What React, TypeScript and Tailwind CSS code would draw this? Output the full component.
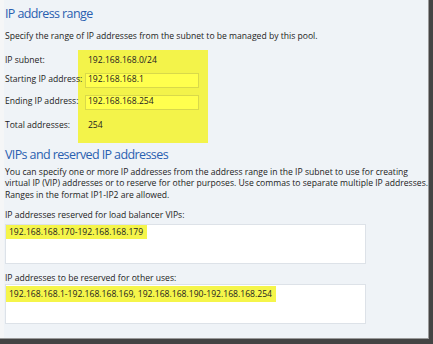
const font = "font-['Open_Sans','Noto_Sans',sans-serif]";

function Label({ children, h, mt }: { children: string; h: string; mt: string }) {
  return <div className={`${h} ${mt} relative z-10 flex items-center whitespace-nowrap`}>{children}</div>;
}

export default function App() {
  return (
    <div className={`w-[433px] h-[344px] bg-[#444] ${font} text-[#222]`}>
      <div className="flex w-[429px] h-[339px] border-r border-b border-[#9a9a9a] bg-[#eff3f7]">
        <div className="w-[7px] bg-[#f5f6f7]" />
        <div className="flex-1 pl-[1px] text-[8.6px] leading-[11.5px] whitespace-nowrap">
          {/* IP address range */}
          <h2 className="mt-[5px] text-[12.5px] leading-[17px] font-normal tracking-[-0.6px] text-[#2a60b0]">
            IP address range
          </h2>
          <p className="mt-[9px]">
            Specify the range of IP addresses from the subnet to be managed by this pool.
          </p>

          <div className="mt-[7px] flex">
            <div className="w-[73px] pt-[2px] flex flex-col">
              <Label h="h-[18px]" mt="mt-0">IP subnet:</Label>
              <Label h="h-[17px]" mt="mt-[2px]">Starting IP address:</Label>
              <Label h="h-[17px]" mt="mt-[5px]">Ending IP address:</Label>
              <Label h="h-[18px]" mt="mt-[6px]">Total addresses:</Label>
            </div>
            <div className="w-[130px] h-[93px] bg-[#f3f34a] pl-[7px] pt-[2px] flex flex-col">
              <div className="h-[18px] flex items-center pl-[3px]">192.168.168.0/24</div>
              <div className="h-[17px] mt-[2px] flex items-center">
                <div className="w-[114px] h-[15px] border border-[#d9d94a] bg-[#ffff4e] pl-[2px] flex items-center">
                  192.168.168.1
                </div>
              </div>
              <div className="h-[17px] mt-[5px] flex items-center">
                <div className="w-[114px] h-[15px] border border-[#d9d94a] bg-[#ffff4e] pl-[2px] flex items-center">
                  192.168.168.254
                </div>
              </div>
              <div className="h-[18px] mt-[6px] flex items-center pl-[3px]">254</div>
            </div>
          </div>

          {/* VIPs */}
          <h2 className="mt-[3px] text-[12.5px] leading-[17px] font-normal tracking-[-0.6px] text-[#2a60b0]">
            VIPs and reserved IP addresses
          </h2>
          <p className="mt-[4px]">
            You can specify one or more IP addresses from the address range in the IP subnet to use for creating
            <br />
            virtual IP (VIP) addresses or to reserve for other purposes. Use commas to separate multiple IP addresses.
            <br />
            Ranges in the format IP1-IP2 are allowed.
          </p>

          <p className="mt-[9px]">IP addresses reserved for load balancer VIPs:</p>
          <div className="mt-[2px] w-[361px] h-[40px] bg-white border border-[#dde2e8]">
            <span className="inline-block bg-[#f5f54a] pl-[3px] pr-[4px] h-[14px] leading-[14px]">
              192.168.168.170-192.168.168.179
            </span>
          </div>

          <p className="mt-[9px]">IP addresses to be reserved for other uses:</p>
          <div className="w-[361px] h-[40px] bg-white border border-[#dde2e8] pt-[1px]">
            <span className="inline-block bg-[#f5f54a] pl-[3px] pr-[4px] h-[16px] leading-[16px]">
              192.168.168.1-192.168.168.169, 192.168.168.190-192.168.168.254
            </span>
          </div>
        </div>
      </div>
    </div>
  );
}
